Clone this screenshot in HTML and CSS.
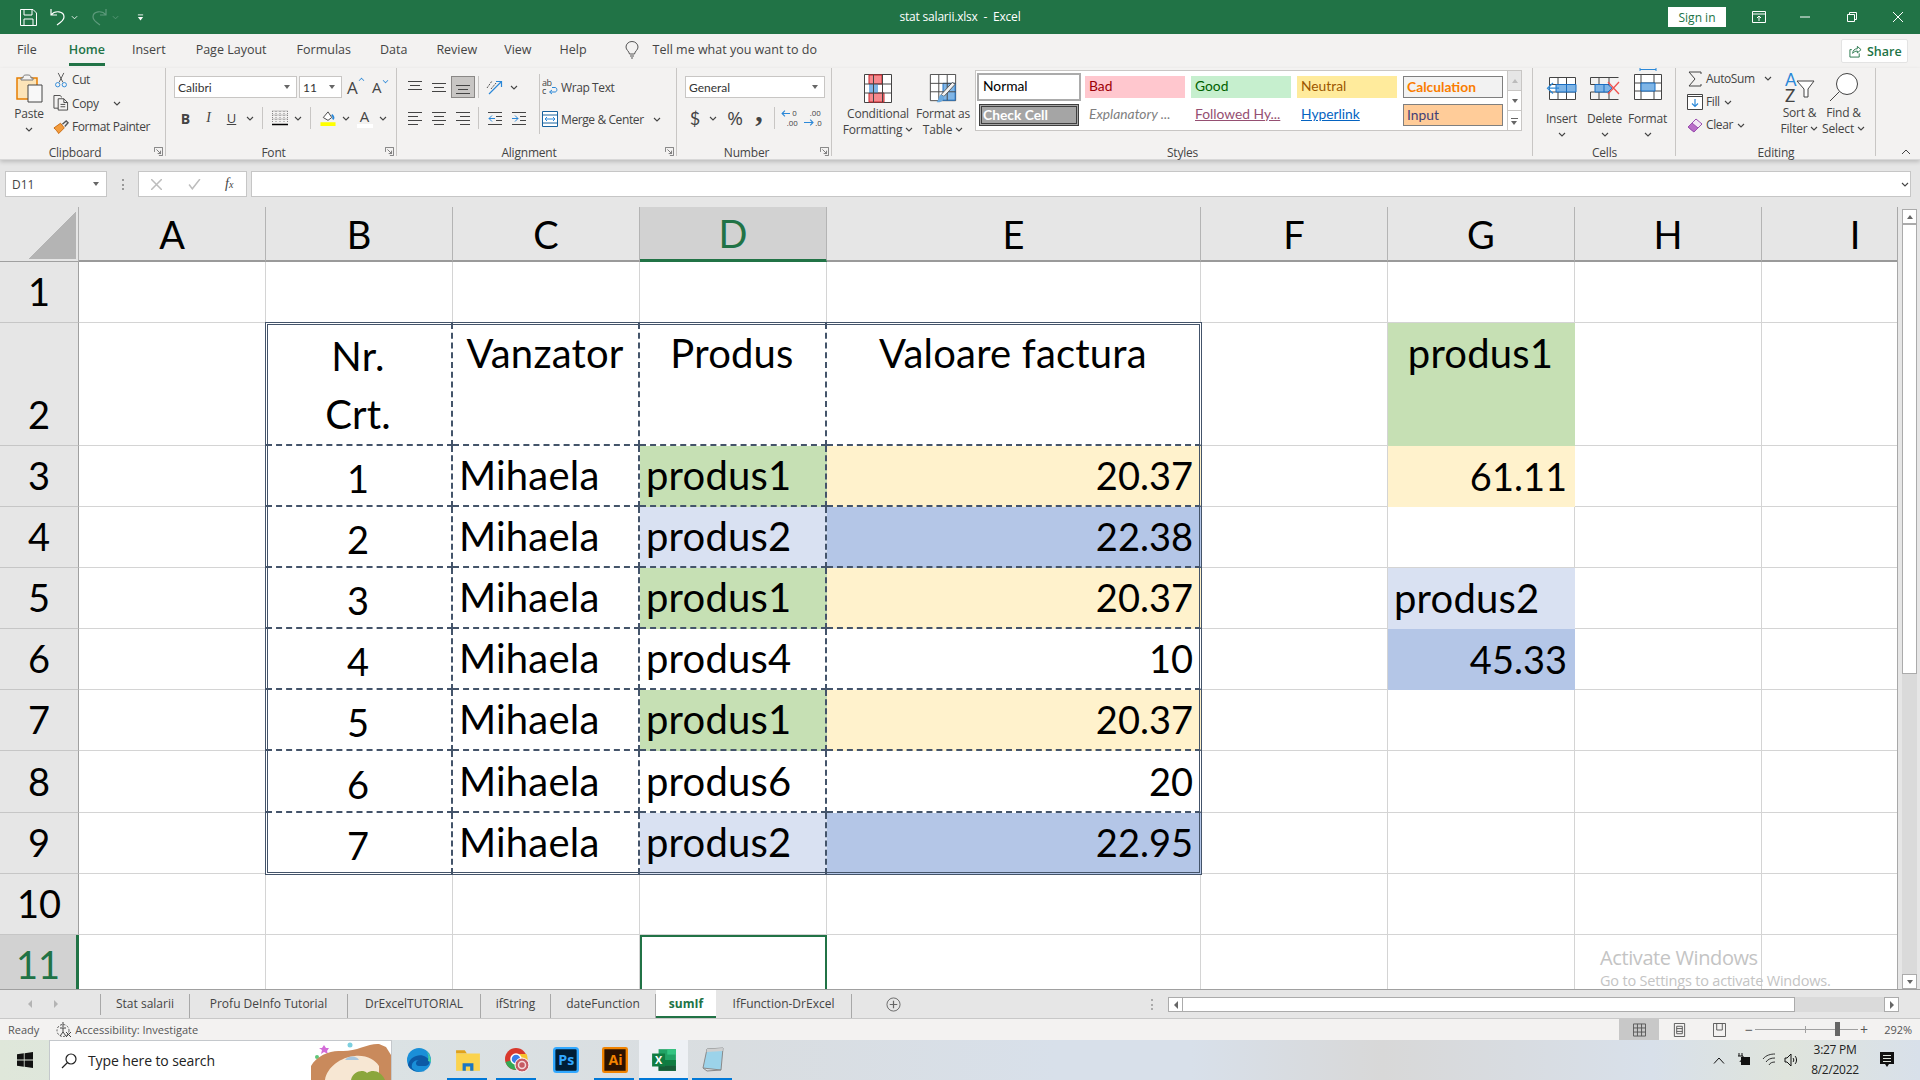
FILE: index.html
```html
<!DOCTYPE html>
<html lang="en">
<head>
  <meta charset="UTF-8" />
  <title>stat salarii.xlsx - Excel</title>
  <link rel="stylesheet" href="styles.css">
</head>
<body>

<svg class="defs">
  <symbol id="chev" viewBox="0 0 8 5"><path d="M1 1l3 3 3-3" fill="none" stroke="#444" stroke-width="1.1"/></symbol>
  <symbol id="launcher" viewBox="0 0 11 11"><path d="M.5 6V.5H10.500V10.500H6M3 3l5 5M8 4.500V8H4.500" fill="none" stroke="#666"/></symbol>
  <symbol id="al-top" viewBox="0 0 16 16"><path d="M1 2.500H15M3 6.500H13M1 10.500H15" stroke="#444" fill="none"/></symbol>
  <symbol id="al-mid" viewBox="0 0 16 16"><path d="M1 4.500H15M3 8.500H13M1 12.500H15" stroke="#444" fill="none"/></symbol>
  <symbol id="al-bot" viewBox="0 0 16 16"><path d="M1 6.500H15M3 10.500H13M1 14.500H15" stroke="#444" fill="none"/></symbol>
  <symbol id="left" viewBox="0 0 16 16"><path d="M1 2.500H15M1 6.500H11M1 10.500H15M1 14.500H11" stroke="#444" fill="none"/></symbol>
  <symbol id="center" viewBox="0 0 16 16"><path d="M1 2.500H15M3 6.500H13M1 10.500H15M3 14.500H13" stroke="#444" fill="none"/></symbol>
  <symbol id="right" viewBox="0 0 16 16"><path d="M1 2.500H15M5 6.500H15M1 10.500H15M5 14.500H15" stroke="#444" fill="none"/></symbol>
</svg>

<header class="titlebar">
  <div class="qat">
    <svg class="qat-save" viewBox="0 0 17 17"><path d="M.5.5H13L16.500 4V16.500H.5ZM4 .5V6H12V.5M4 16.500V10H13V16.500" fill="none" stroke="#fff"/></svg>
    <svg class="qat-undo" viewBox="0 0 16 18"><path d="M1 1V7H7M1 7C5 2 14 3 14 9C14 12 10 15 7 17" fill="none" stroke="#fff" stroke-width="1.2"/></svg>
    <svg class="qat-chev" viewBox="0 0 8 5"><path d="M1 1l3 3 3-3" fill="none" stroke="#fff"/></svg>
    <svg class="qat-redo" viewBox="0 0 16 18"><path d="M15 1V7H9M15 7C11 2 2 3 2 9C2 12 6 15 9 17" fill="none" stroke="#5e9a7c" stroke-width="1.2"/></svg>
    <svg class="qat-chev dim" viewBox="0 0 8 5"><path d="M1 1l3 3 3-3" fill="none" stroke="#5e9a7c"/></svg>
    <svg class="qat-more" viewBox="0 0 8 9"><path d="M1 1.500H7" stroke="#fff"/><path d="M1 4H7L4 8Z" fill="#fff"/></svg>
  </div>
  <div class="doc-title">stat salarii.xlsx &nbsp;-&nbsp; Excel</div>
  <div class="win-controls">
    <button class="signin">Sign in</button>
    <svg class="win-display" viewBox="0 0 14 12"><path d="M.5.500H13.500V11.500H.5ZM.5 3H13.500M7 10V5M5 7l2-2 2 2" fill="none" stroke="#fff"/></svg>
    <svg class="win-min" viewBox="0 0 10 10"><path d="M0 5H10" stroke="#fff"/></svg>
    <svg class="win-max" viewBox="0 0 10 10"><path d="M.5 2.500H7.500V9.500H.5ZM2.500 2.500V.5H9.500V7.500H7.500" fill="none" stroke="#fff"/></svg>
    <svg class="win-close" viewBox="0 0 10 10"><path d="M0 0L10 10M10 0L0 10" stroke="#fff"/></svg>
  </div>
</header>

<nav class="menu">
  <span class="m-file">File</span>
  <span class="m-home">Home</span>
  <span class="m-insert">Insert</span>
  <span class="m-layout">Page Layout</span>
  <span class="m-formulas">Formulas</span>
  <span class="m-data">Data</span>
  <span class="m-review">Review</span>
  <span class="m-view">View</span>
  <span class="m-help">Help</span>
  <svg class="bulb" viewBox="0 0 14 18"><path d="M4.500 13C4 10 1 9 1 6A6 5.500 0 0 1 13 6C13 9 10 10 9.500 13ZM5 15H9M6 17H8" fill="none" stroke="#555"/></svg>
  <span class="m-tell">Tell me what you want to do</span>
  <button class="share">
    <svg viewBox="0 0 14 14"><path d="M3 5H1V13H11V9M4 9C4 6 6 4 9 4V1.500L13 5 9 8.500V6.500C7 6.500 5 7.500 4 9Z" fill="none" stroke="#217346"/></svg>
    Share
  </button>
</nav>

<section class="ribbon">
  <!-- clipboard -->
  <div class="group g-clipboard">
    <div class="group-body">
      <div class="big-btn paste">
        <svg class="ic-paste" viewBox="0 0 27 30"><path d="M1 5H21V26H1Z" fill="#fce4b8" stroke="#e67e00" stroke-width="1.500"/><path d="M7 5C7 2 9 2 11 2S15 2 15 5H17V7H5V5Z" fill="#f3f2f1" stroke="#777"/><path d="M12 12H26V29H12Z" fill="#f8f8f8" stroke="#444"/></svg>
        <span>Paste</span>
        <svg class="chev"><use href="#chev"/></svg>
      </div>
      <div class="small-col">
        <div class="small-btn">
          <svg viewBox="0 0 14 17"><path d="M4 1L9 11M10 1L5 11" stroke="#555" fill="none"/><circle cx="3.500" cy="13.500" r="2.300" fill="none" stroke="#2b88d8"/><circle cx="10.500" cy="13.500" r="2.300" fill="none" stroke="#2b88d8"/></svg>
          <span>Cut</span>
        </div>
        <div class="small-btn">
          <svg viewBox="0 0 16 17"><path d="M5 14H.5V.5H7L9 2.500" fill="none" stroke="#444"/><path d="M5 4H11L15 8V16H5ZM11 4V8H15M7.500 10H12.500M7.500 12.500H12.500" fill="none" stroke="#444"/></svg>
          <span>Copy</span>
          <svg class="chev after"><use href="#chev"/></svg>
        </div>
        <div class="small-btn">
          <svg viewBox="0 0 17 16"><path d="M1 9L8 4 12 9 6 15C5 13 3 11 1 9Z" fill="#f39c3d" stroke="#c96a10"/><path d="M10 5L14 1.500 16 3.500 12.500 7.500" fill="none" stroke="#555" stroke-width="1.500"/></svg>
          <span>Format Painter</span>
        </div>
      </div>
    </div>
    <div class="group-label has-launcher">Clipboard</div>
    <svg class="launcher"><use href="#launcher"/></svg>
  </div>

  <!-- font -->
  <div class="group g-font">
    <div class="group-body stacked">
      <div class="tool-row">
        <div class="combo combo-font"><span>Calibri</span><i class="caret"></i></div>
        <div class="combo combo-size"><span>11</span><i class="caret"></i></div>
        <div class="font-grow">A<i class="grow-up"></i></div>
        <div class="font-shrink">A<i class="shrink-down"></i></div>
      </div>
      <div class="tool-row second">
        <div class="tool bold">B</div>
        <div class="tool italic">I</div>
        <div class="tool underline">U</div>
        <svg class="chev tool-chev"><use href="#chev"/></svg>
        <i class="sep"></i>
        <div class="tool"><svg class="ic16" viewBox="0 0 16 16"><path d="M.5 1H15.500M.5 5H15.500M.5 9H15.500M4 1V13M8 1V13M12 1V13M.5 1V13M15.500 1V13" stroke="#888" stroke-dasharray="1 1" fill="none"/><path d="M0 14.500H16" stroke="#000" stroke-width="1.500"/></svg></div>
        <svg class="chev tool-chev"><use href="#chev"/></svg>
        <i class="sep"></i>
        <div class="tool"><svg class="ic16" viewBox="0 0 16 17"><path d="M3 8L8 2 12 8 8 11Z" fill="#fff" stroke="#444"/><path d="M12 5C14 7 14 9 13 10" fill="none" stroke="#2b88d8" stroke-width="2"/><path d="M0 13H16V17H0Z" fill="#ffff00"/></svg></div>
        <svg class="chev tool-chev"><use href="#chev"/></svg>
        <div class="tool fontcolor">A<i class="swatch"></i></div>
        <svg class="chev tool-chev"><use href="#chev"/></svg>
      </div>
    </div>
    <div class="group-label has-launcher">Font</div>
    <svg class="launcher"><use href="#launcher"/></svg>
  </div>

  <!-- alignment -->
  <div class="group g-align">
    <div class="group-body">
      <div class="align-left">
        <div class="tool-row">
          <div class="tool"><svg class="ic16"><use href="#al-top"/></svg></div>
          <div class="tool"><svg class="ic16"><use href="#al-mid"/></svg></div>
          <div class="tool active"><svg class="ic16"><use href="#al-bot"/></svg></div>
          <i class="sep"></i>
          <div class="tool"><svg class="ic18" viewBox="0 0 18 16"><path d="M3 15L15 3M10 2.500H15.500V8" fill="none" stroke="#2b88d8" stroke-width="1.200"/><path d="M1 9L6 2M5 10L10 4" fill="none" stroke="#555" stroke-dasharray="2 1"/></svg></div>
          <svg class="chev tool-chev"><use href="#chev"/></svg>
        </div>
        <div class="tool-row second">
          <div class="tool"><svg class="ic16"><use href="#left"/></svg></div>
          <div class="tool"><svg class="ic16"><use href="#center"/></svg></div>
          <div class="tool"><svg class="ic16"><use href="#right"/></svg></div>
          <i class="sep"></i>
          <div class="tool"><svg class="ic16" viewBox="0 0 16 16"><path d="M1 2.500H15M9 6.500H15M9 10.500H15M1 14.500H15" stroke="#444" fill="none"/><path d="M8 8.500H2M5 5.500L2 8.500 5 11.500" stroke="#2b88d8" fill="none"/></svg></div>
          <div class="tool"><svg class="ic16" viewBox="0 0 16 16"><path d="M1 2.500H15M9 6.500H15M9 10.500H15M1 14.500H15" stroke="#444" fill="none"/><path d="M1 8.500H7M4 5.500L7 8.500 4 11.500" stroke="#2b88d8" fill="none"/></svg></div>
        </div>
      </div>
      <div class="align-right">
        <div class="small-btn wrap">
          <svg viewBox="0 0 16 16"><text x="0" y="7" class="svg-small">ab</text><text x="0" y="15" class="svg-small">c</text><path d="M8 13H13C15.500 13 15.500 8.500 13 8.500H10M10 11L7.500 13 10 15" fill="none" stroke="#2b88d8"/></svg>
          <span>Wrap Text</span>
        </div>
        <div class="small-btn wrap merge">
          <svg viewBox="0 0 16 16"><path d="M.5.500H15.500V15.500H.5ZM.5 4H15.500M.5 12H15.500" fill="#fff" stroke="#17629e"/><path d="M3 8H13M5 6L3 8 5 10M11 6L13 8 11 10" fill="none" stroke="#2b88d8"/></svg>
          <span>Merge &amp; Center</span>
          <svg class="chev after-merge"><use href="#chev"/></svg>
        </div>
      </div>
    </div>
    <div class="group-label has-launcher">Alignment</div>
    <svg class="launcher"><use href="#launcher"/></svg>
  </div>

  <!-- number -->
  <div class="group g-number">
    <div class="group-body stacked">
      <div class="tool-row">
        <div class="combo combo-number"><span>General</span><i class="caret"></i></div>
      </div>
      <div class="tool-row second">
        <div class="tool num-dollar">$</div>
        <svg class="chev tool-chev"><use href="#chev"/></svg>
        <div class="tool num-percent">%</div>
        <div class="tool num-comma">,</div>
        <i class="sep"></i>
        <div class="tool"><svg class="ic18" viewBox="0 0 16 16"><text x="10" y="6" class="svg-tiny">0</text><text x="5" y="15" class="svg-tiny">.00</text><path d="M8 4H1M3.500 1.500L1 4 3.500 6.500" fill="none" stroke="#2b88d8"/></svg></div>
        <div class="tool"><svg class="ic18" viewBox="0 0 16 16"><text x="5" y="6" class="svg-tiny">.00</text><text x="10" y="15" class="svg-tiny">.0</text><path d="M0 12H8M5.500 9.500L8 12 5.500 14.500" fill="none" stroke="#2b88d8"/></svg></div>
      </div>
    </div>
    <div class="group-label has-launcher">Number</div>
    <svg class="launcher"><use href="#launcher"/></svg>
  </div>

  <!-- styles -->
  <div class="group g-styles">
    <div class="group-body">
      <div class="big-btn cond">
        <svg class="ic-big" viewBox="0 0 28 29"><path d="M.5.500H27.500V28.500H.5Z" fill="#fff" stroke="#444"/><path d="M5 1H18V10H5ZM5 19H20V28H5Z" fill="#f7888c" stroke="#c8272c"/><path d="M5 10H14V19H5Z" fill="#7fb5e6"/><path d="M9.500 1V28M18.500 1V28M.5 10H27.500M.5 19H27.500" stroke="#444" fill="none"/></svg>
        <span>Conditional</span>
        <span>Formatting <svg class="chev inline"><use href="#chev"/></svg></span>
      </div>
      <div class="big-btn astable">
        <svg class="ic-big" viewBox="0 0 28 31"><path d="M.5.500H27.500V28.500H.5Z" fill="#fff" stroke="#444"/><path d="M14 10H27V28H14Z" fill="#7fb5e6" stroke="#1b6ec2"/><path d="M9.500 1V28M18.500 1V28M.5 10H27.500M.5 19H27.500" stroke="#444" fill="none"/><path d="M27 11L15 24 12 22 24 9Z" fill="#f3f2f1" stroke="#555"/><path d="M12 22C9 23 10 28 7 30 12 31 16 28 15 24Z" fill="#6ba9de"/></svg>
        <span>Format as</span>
        <span>Table <svg class="chev inline"><use href="#chev"/></svg></span>
      </div>
      <div class="gallery">
        <div class="gallery-grid">
          <div class="st st-normal">Normal</div>
          <div class="st st-bad">Bad</div>
          <div class="st st-good">Good</div>
          <div class="st st-neutral">Neutral</div>
          <div class="st st-calc">Calculation</div>
          <div class="st st-check">Check Cell</div>
          <div class="st st-expl">Explanatory ...</div>
          <div class="st st-followed"><u>Followed Hy...</u></div>
          <div class="st st-link"><u>Hyperlink</u></div>
          <div class="st st-input">Input</div>
        </div>
        <div class="gallery-scroll">
          <div class="gs gs-up"><i class="tri-up"></i></div>
          <div class="gs gs-down"><i class="tri-down"></i></div>
          <div class="gs gs-more"><i class="tri-more"></i></div>
        </div>
      </div>
    </div>
    <div class="group-label">Styles</div>
  </div>

  <!-- cells -->
  <div class="group g-cells">
    <div class="group-body">
      <div class="big-btn cell-btn">
        <svg class="ic-cell" viewBox="0 0 32 26"><path d="M3.500 3.500H29.500V25.500H3.500ZM3.500 10.500H29.500M3.500 18H29.500M12 3.500V25.500M20.500 3.500V25.500" fill="#fff" stroke="#444"/><path d="M10 10.500H30V18H10ZM20.500 10.500V18" fill="#7fb5e6" stroke="#1b6ec2"/><path d="M13 14.200H3M7 9L1.500 14.200 7 19.500" fill="none" stroke="#2b88d8" stroke-width="1.200"/></svg>
        <span>Insert</span>
        <svg class="chev"><use href="#chev"/></svg>
      </div>
      <div class="big-btn cell-btn">
        <svg class="ic-cell" viewBox="0 0 32 26"><path d="M1.500 3.500H29.500M1.500 25.500H29.500M1.500 3.500V10.500M1.500 18V25.500M10 3.500V25.500M20 3.500V25.500M1.500 10.500H20M1.500 18H20" fill="none" stroke="#444"/><path d="M6 10.500H19L23 14.200 19 18H6ZM15 10.500V18" fill="#7fb5e6" stroke="#1b6ec2"/><path d="M19 8L30 20M30 8L19 20" stroke="#ef5350" stroke-width="1.300"/></svg>
        <span>Delete</span>
        <svg class="chev"><use href="#chev"/></svg>
      </div>
      <div class="big-btn cell-btn">
        <svg class="ic-cell tall" viewBox="0 0 28 32"><path d="M6 1.500H22M6 0V3M22 0V3" stroke="#2b88d8" fill="none"/><path d="M.5 6.500H27.500V31.500H.5ZM.5 15H27.500M.5 23H27.500M7 6.500V31.500M20 6.500V31.500" fill="#fff" stroke="#444"/><path d="M7 15H21V23H7Z" fill="#7fb5e6" stroke="#1b6ec2"/></svg>
        <span>Format</span>
        <svg class="chev"><use href="#chev"/></svg>
      </div>
    </div>
    <div class="group-label">Cells</div>
  </div>

  <!-- editing -->
  <div class="group g-editing">
    <div class="group-body">
      <div class="small-col edit-col">
        <div class="small-btn">
          <svg viewBox="0 0 16 16"><path d="M14 3V1H2L8 8 2 15H14V13" fill="none" stroke="#444"/></svg>
          <span>AutoSum</span>
          <svg class="chev after-sum"><use href="#chev"/></svg>
        </div>
        <div class="small-btn">
          <svg viewBox="0 0 16 16"><path d="M.5.500H15.500V15.500H.5ZM.5 2.500H15.500" fill="#fff" stroke="#444"/><path d="M8 5V12M5 9.500L8 12.500 11 9.500" fill="none" stroke="#2b88d8" stroke-width="1.200"/></svg>
          <span>Fill</span>
          <svg class="chev inline"><use href="#chev"/></svg>
        </div>
        <div class="small-btn">
          <svg viewBox="0 0 16 16"><path d="M1 10L9 2 15 7 7 15Z" fill="#f3e6f5" stroke="#9b4fb0"/><path d="M1 10L5 6 11 11 7 15Z" fill="#b96cc8" stroke="#9b4fb0"/></svg>
          <span>Clear</span>
          <svg class="chev inline"><use href="#chev"/></svg>
        </div>
      </div>
      <div class="big-btn edit-big">
        <svg class="ic-sort" viewBox="0 0 30 32"><text x="0" y="14" class="svg-az blue">A</text><text x="0" y="30" class="svg-az">Z</text><path d="M12 9H29L23 17V25H19V17Z" fill="#fff" stroke="#444"/></svg>
        <span>Sort &amp;</span>
        <span>Filter <svg class="chev inline"><use href="#chev"/></svg></span>
      </div>
      <div class="big-btn edit-big">
        <svg class="ic-find" viewBox="0 0 30 32"><circle cx="18" cy="12" r="10.500" fill="#fff" stroke="#444"/><path d="M10.500 19.500L1 29" stroke="#444" fill="none"/></svg>
        <span>Find &amp;</span>
        <span>Select <svg class="chev inline"><use href="#chev"/></svg></span>
      </div>
    </div>
    <div class="group-label">Editing</div>
  </div>

  <svg class="collapse" viewBox="0 0 10 6"><path d="M1 5l4-4 4 4" fill="none" stroke="#444"/></svg>
</section>

<section class="formula-bar">
  <div class="name-box"><span>D11</span><i class="caret"></i></div>
  <div class="fb-dots"></div>
  <div class="fb-buttons">
    <svg viewBox="0 0 10 10"><path d="M0 0L10 10M10 0L0 10" stroke="#bdbdbd" stroke-width="1.400"/></svg>
    <svg viewBox="0 0 12 10"><path d="M1 5l3 4L11 0" fill="none" stroke="#bdbdbd" stroke-width="1.400"/></svg>
    <em>f<small>x</small></em>
  </div>
  <div class="fb-input"><svg class="chev"><use href="#chev"/></svg></div>
</section>

<section class="workbook">
  <div class="sheet">
    <div class="corner"><i></i></div>
    <div class="ch">A</div><div class="ch">B</div><div class="ch">C</div><div class="ch ch-on">D</div><div class="ch">E</div><div class="ch">F</div><div class="ch">G</div><div class="ch">H</div><div class="ch">I</div>

    <div class="rh">1</div>
    <div class="c"></div><div class="c"></div><div class="c"></div><div class="c"></div><div class="c"></div><div class="c"></div><div class="c"></div><div class="c"></div><div class="c"></div>

    <div class="rh">2</div>
    <div class="c"></div>
    <div class="c t center nr">Nr.<br>Crt.</div>
    <div class="c t center top">Vanzator</div>
    <div class="c t center top">Produs</div>
    <div class="c t-last center top">Valoare factura</div>
    <div class="c"></div>
    <div class="c center top green">produs1</div>
    <div class="c"></div><div class="c"></div>

    <div class="rh">3</div>
    <div class="c"></div>
    <div class="c t center low">1</div><div class="c t">Mihaela</div><div class="c t green">produs1</div><div class="c t-last num yellow">20.37</div>
    <div class="c"></div><div class="c num yellow">61.11</div><div class="c"></div><div class="c"></div>

    <div class="rh">4</div>
    <div class="c"></div>
    <div class="c t center low">2</div><div class="c t">Mihaela</div><div class="c t lblue">produs2</div><div class="c t-last num blue">22.38</div>
    <div class="c"></div><div class="c"></div><div class="c"></div><div class="c"></div>

    <div class="rh">5</div>
    <div class="c"></div>
    <div class="c t center low">3</div><div class="c t">Mihaela</div><div class="c t green">produs1</div><div class="c t-last num yellow">20.37</div>
    <div class="c"></div><div class="c lblue">produs2</div><div class="c"></div><div class="c"></div>

    <div class="rh">6</div>
    <div class="c"></div>
    <div class="c t center low">4</div><div class="c t">Mihaela</div><div class="c t">produs4</div><div class="c t-last num">10</div>
    <div class="c"></div><div class="c num blue">45.33</div><div class="c"></div><div class="c"></div>

    <div class="rh">7</div>
    <div class="c"></div>
    <div class="c t center low">5</div><div class="c t">Mihaela</div><div class="c t green">produs1</div><div class="c t-last num yellow">20.37</div>
    <div class="c"></div><div class="c"></div><div class="c"></div><div class="c"></div>

    <div class="rh">8</div>
    <div class="c"></div>
    <div class="c t center low">6</div><div class="c t">Mihaela</div><div class="c t">produs6</div><div class="c t-last num">20</div>
    <div class="c"></div><div class="c"></div><div class="c"></div><div class="c"></div>

    <div class="rh">9</div>
    <div class="c"></div>
    <div class="c t end center low">7</div><div class="c t end">Mihaela</div><div class="c t end lblue">produs2</div><div class="c t-last end num blue">22.95</div>
    <div class="c"></div><div class="c"></div><div class="c"></div><div class="c"></div>

    <div class="rh">10</div>
    <div class="c"></div><div class="c"></div><div class="c"></div><div class="c"></div><div class="c"></div><div class="c"></div><div class="c"></div><div class="c"></div><div class="c"></div>

    <div class="rh rh-on">11</div>
    <div class="c"></div><div class="c"></div><div class="c"></div><div class="c selected"></div><div class="c"></div><div class="c"></div><div class="c"></div><div class="c"></div><div class="c"></div>

    <div class="table-frame"></div>
    <div class="activate">
      <div class="activate-title">Activate Windows</div>
      <div class="activate-sub">Go to Settings to activate Windows.</div>
    </div>
  </div>
  <div class="vscroll">
    <div class="vs-btn"><i class="tri-up dark"></i></div>
    <div class="vs-thumb"></div>
    <div class="vs-track"></div>
    <div class="vs-btn"><i class="tri-down"></i></div>
  </div>
</section>

<section class="tabbar">
  <div class="tab-nav"><i class="nav-left"></i><i class="nav-right"></i></div>
  <div class="tabs">
    <div class="tab">Stat salarii</div>
    <div class="tab">Profu DeInfo Tutorial</div>
    <div class="tab">DrExcelTUTORIAL</div>
    <div class="tab">ifString</div>
    <div class="tab">dateFunction</div>
    <div class="tab tab-on">sumIf</div>
    <div class="tab">IfFunction-DrExcel</div>
  </div>
  <svg class="tab-add" viewBox="0 0 16 16"><circle cx="8" cy="8" r="7" fill="none" stroke="#666"/><path d="M8 4V12M4 8H12" stroke="#666" stroke-width="1.300"/></svg>
  <div class="hsplit"></div>
  <div class="hscroll">
    <div class="hs-btn"><i class="nav-left dark"></i></div>
    <div class="hs-thumb"></div>
    <div class="hs-track"></div>
    <div class="hs-btn"><i class="nav-right dark"></i></div>
  </div>
</section>

<footer class="statusbar">
  <span class="st-ready">Ready</span>
  <svg class="st-acc" viewBox="0 0 16 16"><circle cx="7" cy="8.500" r="6" fill="none" stroke="#555" stroke-dasharray="2 1.500"/><path d="M7 0V5M4 6H10M7 6V10L4 14M7 10L10 14" stroke="#444" fill="none"/><path d="M10 10L15 15M15 10L10 15" stroke="#444"/></svg>
  <span class="st-access">Accessibility: Investigate</span>
  <div class="view-btns">
    <div class="view-btn on"><svg viewBox="0 0 14 14"><path d="M.5.500H13.500V13.500H.5ZM.5 4.800H13.500M.5 9.200H13.500M4.800.5V13.500M9.200.5V13.500" fill="none" stroke="#555"/></svg></div>
    <div class="view-btn"><svg viewBox="0 0 12 15"><path d="M.5.500H11.500V14.500H.5ZM3 3.500H9V11.500H3ZM3 6H9M3 9H9" fill="none" stroke="#555"/></svg></div>
    <div class="view-btn"><svg viewBox="0 0 14 15"><path d="M.5.500H13.500V14.500H.5ZM4 .5V7.500H10V.5" fill="none" stroke="#555"/></svg></div>
  </div>
  <div class="zoom">
    <span class="z-minus">&minus;</span>
    <div class="z-track"><i class="z-mid"></i><i class="z-thumb"></i></div>
    <span class="z-plus">+</span>
    <span class="z-val">292%</span>
  </div>
</footer>

<footer class="taskbar">
  <div class="start"><svg viewBox="0 0 16 16"><path d="M0 2.300L6.800 1.300V7.600H0ZM7.600 1.200L16 0V7.600H7.600ZM0 8.400H6.800V14.700L0 13.700ZM7.600 8.400H16V16L7.600 14.800Z" fill="#111"/></svg></div>
  <div class="search">
    <svg class="search-ic" viewBox="0 0 16 16"><circle cx="10" cy="6" r="5" fill="none" stroke="#222" stroke-width="1.200"/><path d="M6.500 9.500L1 15" stroke="#222" stroke-width="1.200"/></svg>
    <span>Type here to search</span>
    <svg class="search-art" viewBox="0 0 80 39">
      <path d="M13 4l2 3 3 0-2 3 1 3-4-2-3 2 1-4-3-2 3 0Z" fill="#d36bd8"/>
      <circle cx="39" cy="4" r="2.500" fill="#7dd0e0"/>
      <circle cx="6" cy="16" r="2" fill="#5fc77b"/>
      <path d="M0 39V25C6 14 20 9 30 10 44 11 58 2 68 3L75 6 80 14V39Z" fill="#c98a5c"/>
      <path d="M14 39C16 26 30 16 44 15 56 14 64 19 68 25V39Z" fill="#f7e7d3"/>
      <path d="M34 19C38 14 46 15 48 19Z" fill="#a9c6dc"/>
      <path d="M40 39C42 30 52 28 56 32 62 28 70 30 74 39Z" fill="#8ba63c"/>
    </svg>
  </div>
  <div class="task-icons">
    <div class="ti">
      <svg viewBox="0 0 26 26"><circle cx="13" cy="13" r="12" fill="#1a8fd8"/><path d="M2 18C4 9 14 6 20 10 25 13 24 19 19 19H13C9 19 9 14 13 13 8 13 5 16 6 21 8 24 15 26 19 24 12 26 4 24 2 18Z" fill="#0c5aa6"/><path d="M25 15C25 6 18 1 12 1 19 1 24 6 22 14Z" fill="#43d1a0"/></svg>
    </div>
    <div class="ti open">
      <svg viewBox="0 0 24 24"><path d="M1 3H9L11 6H1Z" fill="#e0a21b"/><path d="M1 6H23V22H1Z" fill="#fbd34e"/><path d="M7 15H17V22H14V18H10V22H7Z" fill="#1b76c4"/></svg>
    </div>
    <div class="ti open">
      <svg viewBox="0 0 26 26"><circle cx="12" cy="12" r="11" fill="#d9382c"/><path d="M12 12L1.500 15A11 11 0 0 0 15 22.600Z" fill="#34a853"/><path d="M12 7H22.500A11 11 0 0 1 15 22.600Z" fill="#f7c32e"/><circle cx="12" cy="12" r="5" fill="#3b7de8" stroke="#fff" stroke-width="1.500"/><circle cx="18" cy="18" r="7" fill="#c65b63" stroke="#fff"/><circle cx="18" cy="18" r="3.500" fill="none" stroke="#f3d9db" stroke-width="1.500"/></svg>
    </div>
    <div class="ti">
      <svg viewBox="0 0 22 22"><rect x="1" y="1" width="20" height="20" rx="2" fill="#001e36" stroke="#31a8ff" stroke-width="2"/><text x="4.500" y="15.500" class="svg-app ps">Ps</text></svg>
    </div>
    <div class="ti open">
      <svg viewBox="0 0 22 22"><rect x="1" y="1" width="20" height="20" rx="1" fill="#2b1200" stroke="#f08300" stroke-width="2"/><text x="5.500" y="15.500" class="svg-app ai">Ai</text></svg>
    </div>
    <div class="ti open now">
      <svg viewBox="0 0 24 22"><path d="M7 1H23V21H7Z" fill="#21a366"/><path d="M15 1H23V6H15Z" fill="#33c481"/><path d="M7 11H23V16H7Z" fill="#107c41"/><path d="M7 16H23V21H7Z" fill="#185c37"/><path d="M1 5H13V17H1Z" fill="#107c41"/><text x="3.800" y="14.500" class="svg-app xl">X</text></svg>
    </div>
    <div class="ti open">
      <svg viewBox="0 0 24 26"><path d="M6 2L22 1 20 23 2 21Z" fill="#9cd3ea" stroke="#8a8a8a"/><path d="M6 2L22 1 21.700 4 5.500 5Z" fill="#cfcfcf"/><path d="M2 21L6 24 20 23" fill="none" stroke="#888"/></svg>
    </div>
  </div>
  <div class="tray">
    <svg class="tray-up" viewBox="0 0 12 7"><path d="M1 6.500L6 1 11 6.500" fill="none" stroke="#111"/></svg>
    <svg class="tray-bat" viewBox="0 0 14 14"><path d="M4 4H13V12H4Z" fill="#111"/><path d="M2 0V3M5 0V3M1 3H6V6C6 7 3 7 3 9" fill="none" stroke="#111"/></svg>
    <svg class="tray-wifi" viewBox="0 0 14 14"><path d="M1 6C4 2 9 1 13 1M4 9C6 6 9 5 13 5M7 12C8 10 10 9 13 9" fill="none" stroke="#333"/></svg>
    <svg class="tray-vol" viewBox="0 0 14 14"><path d="M1 5H3L7 1V13L3 9H1Z" fill="none" stroke="#111"/><path d="M9 5C10 6 10 8 9 9M11 3C13 5 13 9 11 11" fill="none" stroke="#111"/></svg>
    <div class="clock"><div>3:27 PM</div><div>8/2/2022</div></div>
    <svg class="tray-note" viewBox="0 0 14 16"><path d="M0 0H14V12H9L7 15 5 12H0Z" fill="#111"/><path d="M3 3.500H11M3 6.500H11M3 9.500H11" stroke="#dfe4dc"/></svg>
  </div>
</footer>

</body>
</html>
```

FILE: styles.css
```css
* {
  box-sizing: border-box;
}

html, body {
  margin: 0;
  padding: 0;
  width: 1920px;
  height: 1080px;
  overflow: hidden;
}

body {
  font-family: 'Open Sans', sans-serif;
  font-size: 12px;
  color: #444;
  background: #f3f2f1;
}

.defs {
  display: none;
}

svg {
  display: block;
  flex: none;
}

/* title bar */
.titlebar {
  height: 34px;
  background: #217346;
  color: #fff;
  display: grid;
  grid-template-columns: 1fr auto 1fr;
  align-items: center;
}

.qat {
  display: flex;
  align-items: center;
  padding-left: 20px;
}

.qat-save { width: 17px; height: 17px; }
.qat-undo { width: 16px; height: 18px; margin-left: 13px; }
.qat-chev { width: 7px; height: 5px; margin-left: 5px; }
.qat-redo { width: 16px; height: 18px; margin-left: 13px; }
.qat-more { width: 7px; height: 9px; margin-left: 18px; }

.doc-title {
  font-size: 12px;
  letter-spacing: -0.2px;
  margin-top: -2px;
}

.win-controls {
  display: flex;
  align-items: center;
  justify-content: flex-end;
}

.signin {
  width: 58px;
  height: 20px;
  margin-right: 26px;
  border: 0;
  background: #fff;
  color: #217346;
  font: 12px 'Open Sans', sans-serif;
  padding: 0;
}

.win-display { width: 14px; height: 12px; margin-right: 34px; }
.win-min { width: 10px; height: 10px; margin-right: 37px; }
.win-max { width: 10px; height: 10px; margin-right: 36px; }
.win-close { width: 10px; height: 10px; margin-right: 17px; }

/* tab names */
.menu {
  height: 34px;
  display: flex;
  align-items: center;
  padding-bottom: 3px;
  font-size: 12.500px;
}

.menu span {
  flex: none;
}

.m-file { margin-left: 17px; }
.m-home { margin-left: 32px; color: #217346; font-weight: 600; position: relative; }
.m-home::after {
  content: "";
  position: absolute;
  left: 0;
  right: 0;
  top: 22px;
  height: 3px;
  background: #217346;
}
.m-insert { margin-left: 27px; }
.m-layout { margin-left: 30px; }
.m-formulas { margin-left: 30px; }
.m-data { margin-left: 29px; }
.m-review { margin-left: 29px; }
.m-view { margin-left: 27px; }
.m-help { margin-left: 28px; }
.bulb { width: 14px; height: 18px; margin-left: 38px; }
.m-tell { margin-left: 14px; }

.share {
  margin-left: auto;
  margin-right: 12px;
  margin-top: 3px;
  width: 67px;
  height: 24px;
  background: #fff;
  border: 1px solid #e3e3e3;
  border-radius: 2px;
  color: #217346;
  font: 600 12.500px 'Open Sans', sans-serif;
  display: flex;
  align-items: center;
  gap: 5px;
  padding: 0 0 0 7px;
}

.share svg {
  width: 13px;
  height: 13px;
}

/* ribbon */
.ribbon {
  height: 92px;
  display: flex;
  border-bottom: 1px solid #d8d8d8;
  box-shadow: 0 2px 4px rgba(0, 0, 0, 0.18);
  position: relative;
  z-index: 2;
}

.group {
  position: relative;
  display: flex;
  flex-direction: column;
  flex: none;
  height: 91px;
}

.group::after {
  content: "";
  position: absolute;
  right: 0;
  top: 0;
  bottom: 3px;
  width: 1px;
  background: #c8c6c4;
}

.g-clipboard { width: 166px; }
.g-font { width: 231px; }
.g-align { width: 280px; }
.g-number { width: 155px; }
.g-styles { width: 701px; }
.g-cells { width: 143px; }
.g-editing { width: 200px; }

.group-body {
  flex: 1;
  display: flex;
  min-height: 0;
}

.group-label {
  height: 16px;
  line-height: 20px;
  text-align: center;
  font-size: 12px;
  letter-spacing: -0.2px;
}

.group-label.has-launcher {
  padding-right: 16px;
}

.launcher {
  position: absolute;
  right: 3px;
  bottom: 3px;
  width: 9px;
  height: 9px;
}

.chev {
  width: 8px;
  height: 5px;
}

.chev.inline {
  display: inline-block;
  vertical-align: 2px;
}

.big-btn {
  display: flex;
  flex-direction: column;
  align-items: center;
  flex: none;
  line-height: 16px;
  letter-spacing: -0.2px;
  white-space: nowrap;
}

.paste {
  width: 38px;
  margin-left: 10px;
  padding-top: 5px;
}

.ic-paste {
  width: 27px;
  height: 30px;
  margin-bottom: 3px;
}

.paste .chev,
.cell-btn .chev {
  margin-top: 5px;
}

.small-col {
  margin-left: 5px;
  display: flex;
  flex-direction: column;
}

.small-btn {
  height: 23.500px;
  display: flex;
  align-items: center;
  white-space: nowrap;
  letter-spacing: -0.4px;
}

.small-btn > svg:first-child {
  width: 16px;
  height: 16px;
  margin-right: 3px;
}

.small-btn .chev.after { margin-left: 14px; }
.small-btn .chev.inline { margin-left: 4px; margin-top: 2px; }

.stacked {
  flex-direction: column;
  padding: 8px 0 0 8px;
}

.tool-row {
  display: flex;
  align-items: center;
  height: 22px;
}

.tool-row.second {
  margin-top: 9px;
}

.tool {
  width: 23px;
  height: 22px;
  flex: none;
  display: flex;
  align-items: center;
  justify-content: center;
}

.tool.active {
  background: #c8c6c4;
  border: 1px solid #8a8886;
}

.tool-chev {
  margin: 0 3px;
}

.sep {
  width: 1px;
  height: 22px;
  margin: 0 5px;
  background: #c8c6c4;
  flex: none;
}

.ic16 { width: 16px; height: 16px; }
.ic18 { width: 18px; height: 18px; }

.svg-small {
  font: 9px 'Open Sans', sans-serif;
  fill: #444;
}

.svg-tiny {
  font: 7px 'Open Sans', sans-serif;
  fill: #444;
}

.combo {
  height: 22px;
  background: #fff;
  border: 1px solid #c8c6c4;
  font-family: 'Lato', sans-serif;
  display: flex;
  align-items: center;
  justify-content: space-between;
  padding: 0 6px 0 3px;
  flex: none;
  color: #333;
}

.combo-font { width: 123px; }
.combo-size { width: 43px; margin-left: 2px; }
.combo-number { width: 140px; }

.caret {
  border: 3.500px solid transparent;
  border-top: 4px solid #666;
  border-bottom: 0;
}

.font-grow, .font-shrink {
  font-size: 17px;
  position: relative;
  width: 20px;
  margin-left: 5px;
  flex: none;
  color: #444;
}

.font-shrink {
  font-size: 15px;
}

.grow-up, .shrink-down {
  position: absolute;
  left: 12px;
  top: 2px;
  width: 5px;
  height: 5px;
  border-left: 1px solid #2b88d8;
  border-top: 1px solid #2b88d8;
  transform: rotate(45deg) scale(0.8);
}

.shrink-down {
  left: 11px;
  top: 1px;
  transform: rotate(225deg) scale(0.8);
}

.bold { font-weight: 700; font-size: 14px; }
.italic { font-style: italic; font-size: 14px; font-family: 'Liberation Serif', serif; }
.underline { text-decoration: underline; font-size: 13px; }

.fontcolor {
  flex-direction: column;
  font-size: 15px;
  line-height: 15px;
}

.swatch {
  display: block;
  width: 16px;
  height: 4px;
  background: #fff;
}

/* alignment */
.align-left {
  width: 137px;
  margin-left: 6px;
  border-right: 1px solid #c8c6c4;
  height: 60px;
  margin-top: 6px;
  padding-top: 2px;
}

.align-left .tool {
  width: 24px;
}

.align-left .sep {
  margin: 0 4px 0 3px;
}

.align-right {
  padding: 4px 0 0 2px;
  display: flex;
  flex-direction: column;
}

.wrap {
  height: 30px;
}

.merge {
  margin-top: 2px;
}

.merge .chev {
  margin-left: 9px;
}

/* number */
.num-dollar { width: 20px; font-size: 18px; font-family: 'Lato', sans-serif; }
.g-number .tool-chev { margin: 0 4px; }
.num-percent { width: 24px; font-size: 19px; margin-left: 2px; }
.num-comma { width: 24px; font: 700 30px 'Liberation Serif', serif; margin-top: -14px; }
.g-number .sep { margin: 0 3px; }
.g-number .tool { flex: none; }

/* styles */
.g-styles .big-btn {
  padding-top: 6px;
}

.cond { width: 66px; margin-left: 13px; }
.astable { width: 64px; }

.ic-big {
  width: 28px;
  height: 29px;
  margin-bottom: 3px;
}

.gallery {
  width: 547px;
  height: 61px;
  margin-top: 2px;
  background: #fff;
  border: 1px solid #c8c6c4;
  display: flex;
  justify-content: space-between;
}

.gallery-grid {
  display: grid;
  grid-template-columns: repeat(5, 100px);
  grid-auto-rows: 22px;
  gap: 6px;
  padding: 5px 0 0 3px;
}

.st {
  font-family: 'Lato', sans-serif;
  font-size: 13.800px;
  line-height: 20px;
  padding-left: 4px;
  white-space: nowrap;
}

.st-normal {
  margin: -3px -2px;
  border: 2px solid #ababab;
  padding: 1px 0 0 4px;
  color: #000;
}

.st-bad { background: #ffc7ce; color: #9c0006; }
.st-good { background: #c6efce; color: #006100; }
.st-neutral { background: #ffeb9c; color: #9c5700; }
.st-calc { background: #f2f2f2; border: 1px solid #7f7f7f; color: #fa7d00; font-weight: 700; padding-left: 3px; }
.st-check { background: #a5a5a5; border: 3px double #3f3f3f; color: #fff; font-weight: 700; line-height: 16px; padding-left: 1px; }
.st-expl { color: #7f7f7f; font-style: italic; }
.st-followed { color: #954f72; }
.st-link { color: #0563c1; }
.st-input { background: #fc9; border: 1px solid #7f7f7f; color: #3f3f76; padding-left: 3px; }

.gallery-scroll {
  width: 14px;
  display: flex;
  flex-direction: column;
  border-left: 1px solid #c8c6c4;
}

.gs {
  flex: 1;
  display: flex;
  align-items: center;
  justify-content: center;
  border-bottom: 1px solid #c8c6c4;
}

.gs-more { border-bottom: 0; }
.gs-up { background: #e6e6e6; }

.tri-up {
  border: 3.500px solid transparent;
  border-bottom: 4px solid #bbb;
  border-top: 0;
}

.tri-up.dark { border-bottom-color: #666; }

.tri-down {
  border: 3.500px solid transparent;
  border-top: 4px solid #666;
  border-bottom: 0;
}

.tri-more {
  width: 7px;
  height: 6px;
  border-top: 1px solid #666;
  position: relative;
}

.tri-more::after {
  content: "";
  position: absolute;
  top: 2px;
  left: 0;
  border: 3.500px solid transparent;
  border-top: 4px solid #666;
  border-bottom: 0;
}

/* cells */
.g-cells .group-body {
  padding-left: 7px;
}

.cell-btn {
  width: 43px;
  height: 71px;
  justify-content: flex-end;
}

.ic-cell {
  width: 32px;
  height: 26px;
  margin-bottom: 11px;
}

.ic-cell.tall {
  width: 28px;
  height: 32px;
}

.cell-btn .chev {
  margin-bottom: 2px;
}

/* editing */
.edit-col {
  width: 90.500px;
  margin-left: 11px;
  margin-top: -1px;
  flex: none;
}

.edit-col .small-btn {
  height: 23px;
}

.after-sum {
  margin-left: 9px;
}

.edit-big {
  width: 44px;
  padding-top: 4px;
}

.ic-sort, .ic-find {
  width: 30px;
  height: 32px;
  margin-bottom: 1px;
}

.svg-az {
  font: 17px 'Lato', sans-serif;
  fill: #444;
}

.svg-az.blue { fill: #2b88d8; }

.collapse {
  width: 10px;
  height: 6px;
  align-self: flex-end;
  margin: 0 0 4px 25px;
}

/* formula bar */
.formula-bar {
  height: 45px;
  background: #e6e6e6;
  display: flex;
  padding-top: 11px;
  align-items: flex-start;
}

.name-box {
  width: 102px;
  height: 26px;
  margin-left: 5px;
  background: #fff;
  border: 1px solid #c6c6c6;
  display: flex;
  align-items: center;
  justify-content: space-between;
  padding: 0 7px 0 6px;
  font-size: 12px;
}

.fb-dots {
  width: 2px;
  height: 11px;
  margin: 8px 14px 0 15px;
  border-left: 2px dotted #999;
}

.fb-buttons {
  width: 109px;
  height: 26px;
  background: #fff;
  border: 1px solid #c6c6c6;
  display: flex;
  align-items: center;
  padding-left: 12px;
}

.fb-buttons svg {
  width: 11px;
  height: 11px;
  margin-right: 26px;
}

.fb-buttons svg + svg {
  width: 13px;
  margin-right: 24px;
}

.fb-buttons em {
  font: italic 14px 'Liberation Serif', serif;
  color: #444;
}

.fb-buttons small {
  font-size: 10px;
}

.fb-input {
  width: 1660px;
  height: 26px;
  margin-left: 4px;
  background: #fff;
  border: 1px solid #c6c6c6;
  display: flex;
  align-items: center;
  justify-content: flex-end;
  padding-right: 1px;
}

/* sheet */
.workbook {
  height: 785px;
  display: flex;
  background: #e6e6e6;
  border-bottom: 1px solid #a0a0a0;
}

.sheet {
  width: 1898px;
  margin-top: 2px;
  overflow: hidden;
  position: relative;
  display: grid;
  grid-template-columns: 79px 187px 187px 187px 187px 374px 187px 187px 187px 187px;
  grid-template-rows: 55px 61.100px 122.600px repeat(9, 61.150px);
  font-family: 'Lato', sans-serif;
  font-size: 38px;
  color: #000;
  background: #fff;
  border-right: 1px solid #a8a8a8;
}

.corner {
  background: #e6e6e6;
  border-right: 1px solid #b0b0b0;
  border-bottom: 1px solid #a0a0a0;
  padding: 5px 3px 0 28px;
}

.corner i {
  display: block;
  width: 48px;
  height: 47px;
  background: linear-gradient(to bottom right, transparent 50%, #b4b4b4 50%);
}

.ch {
  background: #e6e6e6;
  border-right: 1px solid #b4b4b4;
  border-bottom: 2px solid #9a9a9a;
  display: flex;
  align-items: flex-end;
  justify-content: center;
  line-height: 52px;
}

.ch-on {
  background: #d2d2d2;
  color: #217346;
  border-bottom: 3px solid #217346;
}

.rh {
  background: #e6e6e6;
  border-right: 1px solid #a0a0a0;
  border-bottom: 1px solid #c6c6c6;
  display: flex;
  align-items: flex-end;
  justify-content: center;
  line-height: 61px;
}

.rh-on {
  background: #d2d2d2;
  color: #217346;
  border-right: 3px solid #217346;
}

.c {
  border-right: 1px solid #d4d4d4;
  border-bottom: 1px solid #d4d4d4;
  display: flex;
  align-items: flex-end;
  font-size: 40px;
  letter-spacing: 0.2px;
  line-height: 60px;
  padding: 0 7px 0 6px;
  min-width: 0;
  white-space: nowrap;
}

.t {
  border-right: 2px dashed #44546a;
  border-bottom: 2px dashed #44546a;
}

.t-last {
  border-right-color: transparent;
  border-bottom: 2px dashed #44546a;
}

.t.end, .t-last.end {
  border-bottom: 0;
  padding-bottom: 2px;
}

.center { justify-content: center; }
.top { align-items: flex-start; }
.num { justify-content: flex-end; font-size: 38px; letter-spacing: 0; padding-right: 7px; }
.low { font-size: 38px; letter-spacing: 0; padding-top: 3px; line-height: 54px; }

.nr {
  white-space: normal;
  text-align: center;
  line-height: 58px;
  padding-bottom: 1px;
}

.green { background: #c6e0b4; border-right-color: transparent; border-bottom-color: transparent; }
.yellow { background: #fff2cc; border-right-color: transparent; border-bottom-color: transparent; }
.lblue { background: #d9e1f2; border-right-color: transparent; border-bottom-color: transparent; }
.blue { background: #b4c6e7; border-right-color: transparent; border-bottom-color: transparent; }

.t.green, .t.lblue { border-right-color: #44546a; border-bottom-color: #44546a; }
.t-last.yellow, .t-last.blue { border-bottom-color: #44546a; }

.selected {
  border: 2px solid #217346;
  border-bottom: 0;
}

.table-frame {
  position: absolute;
  grid-column: 3 / 7;
  grid-row: 3 / 11;
  top: -1px;
  left: -1px;
  right: -1px;
  bottom: -1px;
  border: 3px double #44546a;
  pointer-events: none;
}

.activate {
  position: absolute;
  left: 1600px;
  top: 738px;
  font-family: 'Open Sans', sans-serif;
  color: #c4c4c4;
  pointer-events: none;
}

.activate-title {
  font-size: 20px;
  line-height: 26px;
  letter-spacing: -0.4px;
}

.activate-sub {
  font-size: 14.500px;
  line-height: 20px;
  letter-spacing: -0.2px;
  white-space: nowrap;
}

.vscroll {
  width: 22px;
  padding: 4px 3px 0 4px;
  display: flex;
  flex-direction: column;
}

.vs-btn {
  height: 15px;
  background: #fff;
  border: 1px solid #ababab;
  display: flex;
  align-items: center;
  justify-content: center;
  flex: none;
}

.vs-thumb {
  height: 450px;
  background: #fff;
  border: 1px solid #ababab;
  flex: none;
}

.vs-track {
  flex: 1;
  background: #dadada;
}

/* sheet tabs */
.tabbar {
  height: 29px;
  background: #e6e6e6;
  display: flex;
  align-items: stretch;
  border-bottom: 1px solid #c8c8c8;
}

.tab-nav {
  width: 100px;
  display: flex;
  align-items: center;
  gap: 22px;
  padding-left: 28px;
}

.nav-left {
  border: 4px solid transparent;
  border-right: 4px solid #b4b4b4;
  border-left: 0;
}

.nav-right {
  border: 4px solid transparent;
  border-left: 4px solid #b4b4b4;
  border-right: 0;
}

.nav-left.dark { border-right-color: #666; }
.nav-right.dark { border-left-color: #666; }

.tabs {
  display: grid;
  grid-template-columns: 89px 158px 133px 70px 105px 60px 136px;
  border-left: 1px solid #a8a8a8;
  margin-top: 4px;
  height: 21px;
}

.tab {
  border-right: 1px solid #a8a8a8;
  text-align: center;
  line-height: 20px;
  white-space: nowrap;
}

.tab-on {
  margin-top: -4px;
  height: 28px;
  line-height: 27px;
  background: #fff;
  color: #217346;
  font-weight: 700;
  border-bottom: 2px solid #217346;
  border-right: 0;
}

.tab-add {
  width: 15px;
  height: 15px;
  margin: 7px 0 0 34px;
}

.hsplit {
  width: 2px;
  height: 11px;
  margin: 9px 15px 0 250px;
  border-left: 2px dotted #aaa;
}

.hscroll {
  display: flex;
  height: 15px;
  margin-top: 7px;
}

.hs-btn {
  width: 15px;
  background: #fff;
  border: 1px solid #ababab;
  display: flex;
  align-items: center;
  justify-content: center;
}

.hs-thumb {
  width: 612px;
  background: #fff;
  border: 1px solid #ababab;
  border-left: 0;
}

.hs-track {
  width: 89px;
  background: #dadada;
}

/* status bar */
.statusbar {
  height: 21px;
  display: flex;
  align-items: center;
  font-size: 11px;
  color: #555;
  background: #f3f2f1;
}

.st-ready { margin-left: 8px; }
.st-acc { width: 16px; height: 16px; margin-left: 17px; }
.st-access { margin-left: 3px; }

.view-btns {
  display: flex;
  margin-left: 1421px;
  height: 21px;
}

.view-btn {
  width: 40px;
  display: flex;
  align-items: center;
  justify-content: center;
}

.view-btn svg {
  width: 13px;
  height: 14px;
}

.view-btn.on {
  background: #c8c8c8;
}

.zoom {
  display: flex;
  align-items: center;
  margin-left: 4px;
  flex: none;
}

.z-minus, .z-plus {
  font-size: 14px;
  width: 12px;
  text-align: center;
}

.z-track {
  width: 103px;
  height: 1px;
  background: #a0a0a0;
  position: relative;
}

.z-mid {
  position: absolute;
  left: 50px;
  top: -3px;
  width: 1px;
  height: 7px;
  background: #a0a0a0;
}

.z-thumb {
  position: absolute;
  left: 80px;
  top: -7px;
  width: 5px;
  height: 14px;
  background: #666;
}

.z-val { margin-left: 14px; }

/* taskbar */
.taskbar {
  height: 40px;
  display: flex;
  background: linear-gradient(to right, #dfe7da 0, #dbe2e4 20%, #d9dde0 38%, #d8e0ea 55%, #d8e0ea 62%, #d8d8d8 72%, #d8e0ea 86%, #dfe4dc 93%, #d8e0ea 100%);
}

.start {
  width: 49px;
  display: flex;
  align-items: center;
  justify-content: center;
}

.start svg {
  width: 16px;
  height: 16px;
}

.search {
  width: 343px;
  background: #fff;
  border: 1px solid #c4c8cc;
  border-width: 1px 1px 0 1px;
  display: flex;
  align-items: center;
  font-size: 14px;
  letter-spacing: -0.1px;
  color: #222;
}

.search-ic {
  width: 16px;
  height: 16px;
  margin-left: 11px;
  margin-right: 11px;
}

.search-art {
  width: 80px;
  height: 39px;
  margin-left: auto;
}

.task-icons {
  display: flex;
  margin-left: 2px;
}

.ti {
  width: 49px;
  display: flex;
  align-items: center;
  justify-content: center;
  position: relative;
}

.ti svg {
  width: 26px;
  height: 26px;
}

.ti.open::after {
  content: "";
  position: absolute;
  left: 4px;
  right: 5px;
  bottom: 0;
  height: 2px;
  background: #0078d7;
}

.ti.now {
  background: #eef1f5;
}

.ti.now::after {
  left: 0;
  right: 0;
}

.svg-app {
  font: 700 12px 'Open Sans', sans-serif;
}

.svg-app.ps { fill: #31a8ff; }
.svg-app.ai { fill: #f08300; }
.svg-app.xl { fill: #fff; font-size: 10px; }

.tray {
  margin-left: auto;
  display: flex;
  align-items: center;
  padding-right: 26px;
}

.tray-up { width: 12px; height: 7px; margin-right: 12px; }
.tray-bat { width: 14px; height: 14px; margin-right: 11px; }
.tray-wifi { width: 14px; height: 14px; margin-right: 8px; }
.tray-vol { width: 14px; height: 14px; margin-right: 6px; }

.clock {
  font-size: 12px;
  letter-spacing: -0.3px;
  line-height: 20px;
  text-align: center;
  color: #222;
  width: 62px;
}

.tray-note {
  width: 14px;
  height: 16px;
  margin-left: 14px;
}
```
